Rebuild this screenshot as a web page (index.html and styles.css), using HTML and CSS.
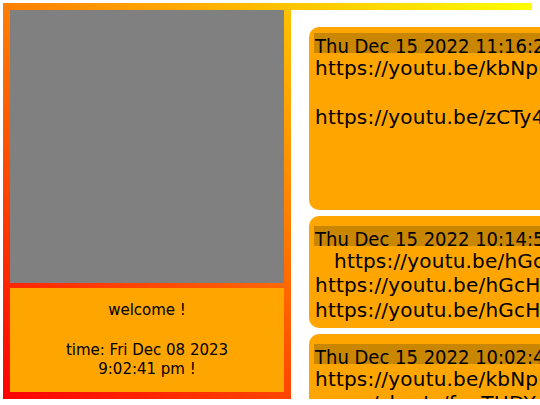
FILE: index.html
```html
<!DOCTYPE html>
<html>
<head>
<meta charset="utf-8">
<link rel="stylesheet" href="styles.css">
</head>
<body>
<div class="app">
  <div class="side">
    <div class="video"></div>
    <div class="info">
      <div class="welcome">welcome !</div>
      <div class="time">time: Fri Dec 08 2023<br>9:02:41 pm !</div>
    </div>
  </div>
  <div class="feed">
    <div class="card card-first">
      <div class="stamp">Thu Dec 15 2022 11:16:25 GMT+0100 (Central European Standard Time)</div>
      <div class="body">
        <div class="line">https://youtu.be/kbNprW1hQ8c</div>
        <div class="line">&nbsp;</div>
        <div class="line">https://youtu.be/zCTy4Jv0mPk</div>
      </div>
    </div>
    <div class="card">
      <div class="stamp">Thu Dec 15 2022 10:14:52 GMT+0100 (Central European Standard Time)</div>
      <div class="body">
        <div class="line indent">https://youtu.be/hGcHx2Lq9Ts</div>
        <div class="line">https://youtu.be/hGcHx2Lq9Ts?t=12</div>
        <div class="line">https://youtu.be/hGcHx2Lq9Ts?t=48</div>
      </div>
    </div>
    <div class="card">
      <div class="stamp">Thu Dec 15 2022 10:02:47 GMT+0100 (Central European Standard Time)</div>
      <div class="body">
        <div class="line">https://youtu.be/kbNprW1hQ8c https://youtube</div>
        <div class="line indent-small">.com/shorts/fonTHDYg4aQ</div>
      </div>
    </div>
  </div>
</div>
</body>
</html>
```
FILE: styles.css
```css
html, body {
  margin: 0;
  padding: 0;
  background: #ffffff;
  overflow: hidden;
}

body {
  font-family: "DejaVu Sans", sans-serif;
  color: #000000;
}

.app {
  margin: 3px 0 0 3px;
  width: 529px;
  height: 396px;
  box-sizing: border-box;
  padding: 7px 0 0 7px;
  background: linear-gradient(to top right, #ff0000, #ffff00);
  display: flex;
}

.side {
  flex: none;
  width: 274px;
  margin-right: 7px;
  padding-bottom: 7px;
  display: flex;
  flex-direction: column;
  gap: 5px;
}

.video {
  height: 273px;
  background: #808080;
}

.info {
  flex: 1;
  background: #ffa500;
  display: flex;
  flex-direction: column;
  justify-content: center;
  align-items: center;
  text-align: center;
  font-size: 15px;
  line-height: 18.7px;
}

.welcome {
  margin-bottom: 21px;
}

.feed {
  flex: none;
  width: 420px;
  background: #ffffff;
  padding: 17px 0 0 18px;
  display: flex;
  flex-direction: column;
  gap: 6px;
}

.card {
  flex: none;
  width: 400px;
  box-sizing: border-box;
  background: #ffa500;
  border-radius: 10px;
  padding: 10px 0 6px 5px;
  white-space: nowrap;
  overflow: hidden;
}

.card-first {
  height: 183px;
  padding-top: 6px;
}

.stamp {
  font-family: "DejaVu Sans Condensed", "DejaVu Sans", sans-serif;
  font-stretch: condensed;
  font-size: 20px;
  line-height: 20px;
  height: 17px;
  padding: 3px 0 0 1px;
  background: #c98600;
  overflow: hidden;
}

.body {
  padding-top: 3px;
}

.line {
  font-size: 20px;
  line-height: 24.3px;
  padding-left: 1px;
  letter-spacing: 0.2px;
}

.indent {
  padding-left: 20px;
}

.indent-small {
  padding-left: 8px;
}
```
